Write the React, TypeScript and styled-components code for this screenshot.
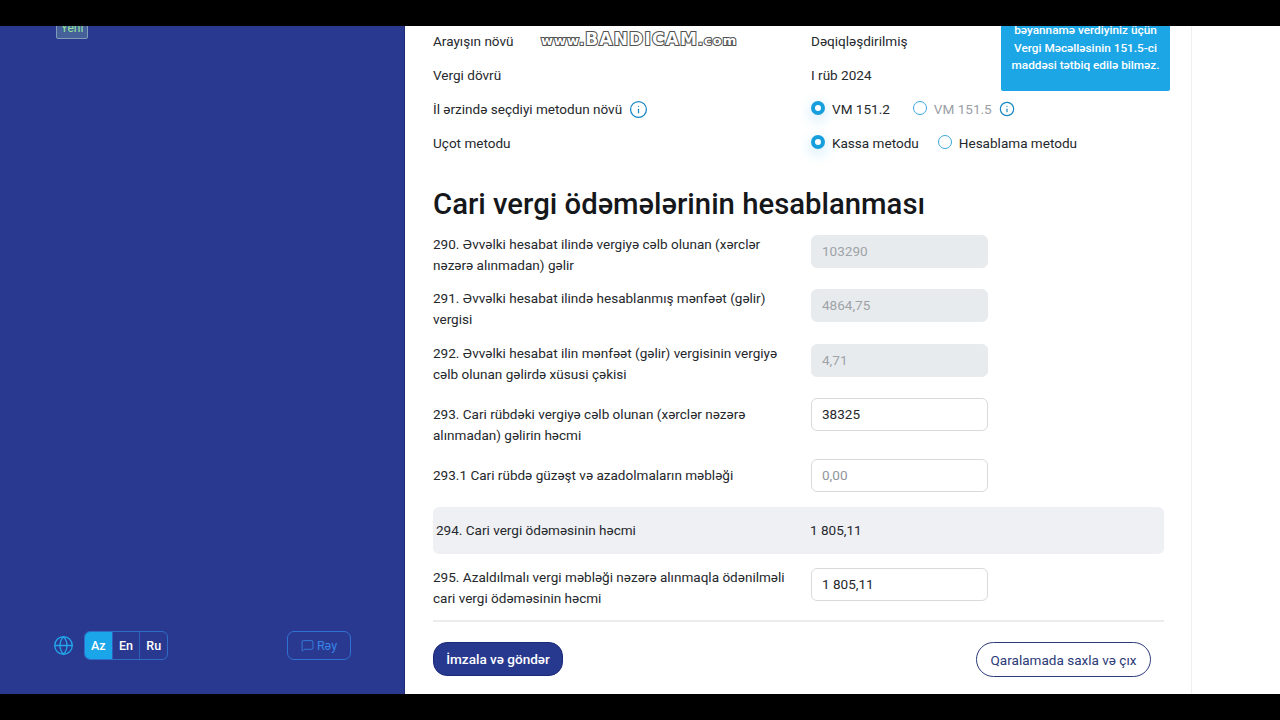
import React, { FC } from 'react';
import { Globe, Info, MessageSquare } from 'lucide-react';
import styled, { createGlobalStyle } from 'styled-components';

const GlobalStyle = createGlobalStyle`
  html, body {
    margin: 0;
    height: 100%;
    background: #000;
    overflow: hidden;
  }
  body {
    font-family: Roboto, "Liberation Sans", sans-serif;
    color: #25282c;
  }
`;

const Page = styled.div`
  width: 1280px;
  height: 720px;
  padding: 26px 0;
  box-sizing: border-box;
  background: #000;
`;

const Screen = styled.div`
  display: flex;
  height: 668px;
  overflow: hidden;
  background: #fff;
`;

const Sidebar = styled.aside`
  width: 405px;
  flex: none;
  display: flex;
  flex-direction: column;
  justify-content: space-between;
  align-items: flex-start;
  box-sizing: border-box;
  padding: 0 53px 34px 53px;
  background: #2a3990;
  border-right: 1px solid #1d2a78;
`;

const NewBadge = styled.span`
  display: block;
  margin: -8px 0 0 3px;
  width: 32px;
  height: 21px;
  box-sizing: border-box;
  text-align: center;
  font-size: 12px;
  line-height: 19px;
  color: #92e39a;
  background: #46609a;
  border: 1px solid #7f9bb8;
  border-radius: 2px;
`;

const SidebarFooter = styled.div`
  width: 100%;
  display: flex;
  align-items: center;
  justify-content: space-between;
`;

const LangArea = styled.div`
  display: flex;
  align-items: center;
  gap: 10px;
  color: #22a5ea;
`;

const LangGroup = styled.div`
  display: flex;
  width: 84px;
  height: 29px;
  box-sizing: border-box;
  border: 1px solid #2f6cc8;
  border-radius: 6px;
  overflow: hidden;
`;

const LangButton = styled.span<{ $active?: boolean }>`
  flex: 1;
  box-sizing: border-box;
  font-size: 12.5px;
  font-weight: 500;
  line-height: 27px;
  text-align: center;
  color: #fff;
  background: ${(p) => (p.$active ? '#1ba6ea' : 'transparent')};
  & + & {
    border-left: 1px solid #2f5fb8;
  }
`;

const FeedbackButton = styled.span`
  display: flex;
  align-items: center;
  justify-content: center;
  gap: 3px;
  width: 64px;
  height: 29px;
  box-sizing: border-box;
  font-size: 12.5px;
  color: #3684e6;
  border: 1px solid #2f72d4;
  border-radius: 7px;
`;

const Main = styled.main`
  position: relative;
  width: 787px;
  flex: none;
  box-sizing: border-box;
  padding: 0 27px 0 28px;
  border-right: 1px solid #eeeff2;
  font-size: 13.55px;
`;

const InfoRows = styled.div`
  margin-top: -2px;
`;

const InfoRow = styled.div`
  display: flex;
  align-items: center;
  height: 34px;
  line-height: 21px;
`;

const InfoLabel = styled.div`
  display: flex;
  align-items: center;
  gap: 7px;
  width: 378px;
  box-sizing: border-box;
  flex: none;
`;

const InfoIcon = styled(Info)`
  color: #1687c4;
  flex: none;
`;

const RadioGroup = styled.div<{ $gap: number }>`
  display: flex;
  align-items: center;
  gap: ${(p) => p.$gap}px;
`;

const RadioItem = styled.label<{ $disabled?: boolean }>`
  display: flex;
  align-items: center;
  gap: 7px;
  color: ${(p) => (p.$disabled ? '#9aa0a6' : 'inherit')};
`;

const RadioMark = styled.span<{ $checked?: boolean }>`
  width: 14px;
  height: 14px;
  margin-bottom: 2px;
  box-sizing: border-box;
  border-radius: 50%;
  background: ${(p) => (p.$checked ? '#fff' : 'transparent')};
  border: ${(p) => (p.$checked ? '4px solid #169fdc' : '1px solid #3aa6d8')};
  box-shadow: ${(p) => (p.$checked ? '0 4px 12px 3px rgba(27, 166, 234, 0.14)' : 'none')};
`;

const Title = styled.h1`
  margin: 27px 0 14px;
  font-size: 29.3px;
  font-weight: 500;
  line-height: 34px;
  color: #15171a;
`;

const FieldRow = styled.div<{ $gap?: number }>`
  display: flex;
  align-items: flex-start;
  margin-bottom: ${(p) => p.$gap ?? 12}px;
`;

const FieldLabel = styled.div<{ $offset?: number }>`
  width: 378px;
  flex: none;
  box-sizing: border-box;
  padding: ${(p) => p.$offset ?? 0}px 18px 0 0;
  margin: ${(p) => (p.$offset ? '0' : '-1px 0 1px')};
  line-height: 21px;
`;

const FieldInput = styled.input<{ $disabled?: boolean }>`
  display: block;
  width: 177px;
  height: 33px;
  box-sizing: border-box;
  padding: 0 10px 2px;
  font-family: inherit;
  font-size: 13.55px;
  color: ${(p) => (p.$disabled ? '#9ea3a8' : '#25282c')};
  background: ${(p) => (p.$disabled ? '#e8ebed' : '#fff')};
  border: 1px solid ${(p) => (p.$disabled ? '#e8ebed' : '#d8dade')};
  border-radius: 6px;
  outline: none;
  &::placeholder {
    color: #8f959b;
  }
`;

const TotalRow = styled.div`
  display: flex;
  align-items: center;
  height: 47px;
  box-sizing: border-box;
  padding: 0 0 2px 3px;
  margin: 15px 0 14px;
  border-radius: 6px;
  background: #eff0f4;
`;

const TotalLabel = styled.div`
  width: 374px;
  flex: none;
`;

const Divider = styled.hr`
  margin: 10px 0 20px;
  border: 0;
  border-top: 2px solid #ececee;
`;

const Actions = styled.div`
  display: flex;
  align-items: flex-start;
  justify-content: space-between;
  padding-right: 13px;
`;

const PrimaryButton = styled.button`
  width: 130px;
  height: 34px;
  font-family: inherit;
  font-size: 13.55px;
  font-weight: 500;
  color: #fff;
  background: #27388f;
  border: 1px solid #1b2a78;
  border-radius: 14px;
`;

const SecondaryButton = styled.button`
  width: 175px;
  height: 35px;
  font-family: inherit;
  font-size: 13.55px;
  color: #2b3a78;
  background: #fff;
  border: 1px solid #2b3a78;
  border-radius: 18px;
`;

const Hint = styled.div`
  position: absolute;
  top: -20px;
  left: 596px;
  width: 169px;
  height: 85px;
  box-sizing: border-box;
  padding: 16px 8px 0;
  text-align: center;
  font-size: 11.8px;
  font-weight: 500;
  line-height: 17.5px;
  color: #fff;
  background: #1ca6e6;
  border-radius: 2px;
`;

const Watermark = styled.div`
  position: absolute;
  top: 3px;
  left: 136px;
  font-family: "DejaVu Sans", sans-serif;
  font-size: 17px;
  font-weight: 700;
  letter-spacing: 1.2px;
  line-height: 20px;
  white-space: nowrap;
  color: #fff;
  -webkit-text-stroke: 2px #555;
  paint-order: stroke fill;
  text-shadow: 0 0 1px #333;
`;

const WatermarkSmall = styled.span`
  font-size: 13px;
  letter-spacing: 1px;
`;

const App: FC = () => (
  <Page>
    <GlobalStyle />
    <Screen>
      <Sidebar>
        <NewBadge>Yeni</NewBadge>
        <SidebarFooter>
          <LangArea>
            <Globe size={21} strokeWidth={1.5} />
            <LangGroup>
              <LangButton $active>Az</LangButton>
              <LangButton>En</LangButton>
              <LangButton>Ru</LangButton>
            </LangGroup>
          </LangArea>
          <FeedbackButton>
            <MessageSquare size={13} strokeWidth={1.6} />
            Rəy
          </FeedbackButton>
        </SidebarFooter>
      </Sidebar>
      <Main>
        <Watermark>
          <WatermarkSmall>www.</WatermarkSmall>BANDICAM<WatermarkSmall>.com</WatermarkSmall>
        </Watermark>
        <Hint>
          bəyannamə verdiyiniz üçün Vergi Məcəlləsinin 151.5-ci maddəsi tətbiq edilə bilməz.
        </Hint>
        <InfoRows>
          <InfoRow>
            <InfoLabel>Arayışın növü</InfoLabel>
            Dəqiqləşdirilmiş
          </InfoRow>
          <InfoRow>
            <InfoLabel>Vergi dövrü</InfoLabel>I rüb 2024
          </InfoRow>
          <InfoRow>
            <InfoLabel>
              İl ərzində seçdiyi metodun növü
              <InfoIcon size={19} strokeWidth={1.6} />
            </InfoLabel>
            <RadioGroup $gap={23}>
              <RadioItem>
                <RadioMark $checked />
                VM 151.2
              </RadioItem>
              <RadioItem $disabled>
                <RadioMark />
                VM 151.5
                <InfoIcon size={16} strokeWidth={1.8} />
              </RadioItem>
            </RadioGroup>
          </InfoRow>
          <InfoRow>
            <InfoLabel>Uçot metodu</InfoLabel>
            <RadioGroup $gap={19}>
              <RadioItem>
                <RadioMark $checked />
                Kassa metodu
              </RadioItem>
              <RadioItem>
                <RadioMark />
                Hesablama metodu
              </RadioItem>
            </RadioGroup>
          </InfoRow>
        </InfoRows>
        <Title>Cari vergi ödəmələrinin hesablanması</Title>
        <FieldRow>
          <FieldLabel>290. Əvvəlki hesabat ilində vergiyə cəlb olunan (xərclər nəzərə alınmadan) gəlir</FieldLabel>
          <FieldInput $disabled disabled defaultValue='103290' />
        </FieldRow>
        <FieldRow $gap={13}>
          <FieldLabel>291. Əvvəlki hesabat ilində hesablanmış mənfəət (gəlir) vergisi</FieldLabel>
          <FieldInput $disabled disabled defaultValue='4864,75' />
        </FieldRow>
        <FieldRow>
          <FieldLabel>292. Əvvəlki hesabat ilin mənfəət (gəlir) vergisinin vergiyə cəlb olunan gəlirdə xüsusi çəkisi</FieldLabel>
          <FieldInput $disabled disabled defaultValue='4,71' />
        </FieldRow>
        <FieldRow $gap={13}>
          <FieldLabel $offset={6}>293. Cari rübdəki vergiyə cəlb olunan (xərclər nəzərə alınmadan) gəlirin həcmi</FieldLabel>
          <FieldInput defaultValue='38325' />
        </FieldRow>
        <FieldRow $gap={0}>
          <FieldLabel $offset={6}>293.1 Cari rübdə güzəşt və azadolmaların məbləği</FieldLabel>
          <FieldInput placeholder='0,00' />
        </FieldRow>
        <TotalRow>
          <TotalLabel>294. Cari vergi ödəməsinin həcmi</TotalLabel>
          1 805,11
        </TotalRow>
        <FieldRow $gap={0}>
          <FieldLabel>295. Azaldılmalı vergi məbləği nəzərə alınmaqla ödənilməli cari vergi ödəməsinin həcmi</FieldLabel>
          <FieldInput defaultValue='1 805,11' />
        </FieldRow>
        <Divider />
        <Actions>
          <PrimaryButton>İmzala və göndər</PrimaryButton>
          <SecondaryButton>Qaralamada saxla və çıx</SecondaryButton>
        </Actions>
      </Main>
    </Screen>
  </Page>
);

export default App;
